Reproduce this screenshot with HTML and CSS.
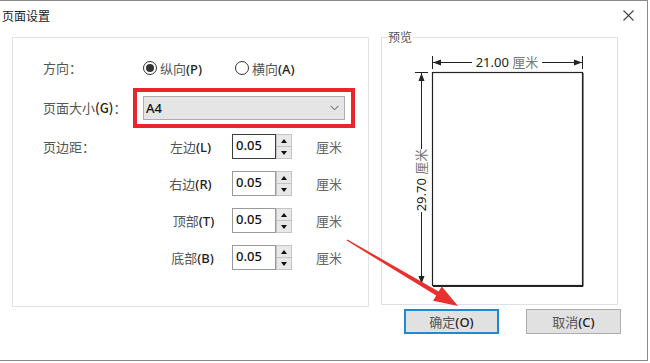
FILE: index.html
```html
<!DOCTYPE html>
<html lang="zh">
<head>
<meta charset="utf-8">
<title>页面设置</title>
<link rel="stylesheet" href="styles.css">
</head>
<body>
<div class="dialog">
  <div class="titlebar">
    <span class="title">页面设置</span>
    <svg class="close" width="11" height="11" viewBox="0 0 11 11"><path d="M0.5 0.5 L10.5 10.5 M10.5 0.5 L0.5 10.5" stroke="#444" stroke-width="1.1" fill="none"/></svg>
  </div>
  <div class="content">
    <div class="group">
      <div class="row orient">
        <span class="label">方向：</span>
        <span class="option opt1"><span class="radio checked"></span><span>纵向<b>(P)</b></span></span>
        <span class="option"><span class="radio"></span><span>横向<b>(A)</b></span></span>
      </div>
      <div class="row size">
        <span class="label narrow">页面大小<b>(G)</b>：</span>
        <div class="highlight">
          <div class="combo">
            <span class="combo-val">A4</span>
            <svg width="9" height="6" viewBox="0 0 9 6"><path d="M0.5 0.8 L4.5 4.8 L8.5 0.8" stroke="#555" stroke-width="1" fill="none"/></svg>
          </div>
        </div>
      </div>
      <div class="margins">
        <div class="mrow">
          <span class="label">页边距：</span>
          <span class="mlabel">左边<b>(L)</b></span>
          <span class="num focus">0.05</span>
          <span class="spin"><span class="up"></span><span class="down"></span></span>
          <span class="unit">厘米</span>
        </div>
        <div class="mrow">
          <span class="label"></span>
          <span class="mlabel">右边<b>(R)</b></span>
          <span class="num">0.05</span>
          <span class="spin"><span class="up"></span><span class="down"></span></span>
          <span class="unit">厘米</span>
        </div>
        <div class="mrow">
          <span class="label"></span>
          <span class="mlabel shift">顶部<b>(T)</b></span>
          <span class="num">0.05</span>
          <span class="spin"><span class="up"></span><span class="down"></span></span>
          <span class="unit">厘米</span>
        </div>
        <div class="mrow">
          <span class="label"></span>
          <span class="mlabel shift2">底部<b>(B)</b></span>
          <span class="num">0.05</span>
          <span class="spin"><span class="up"></span><span class="down"></span></span>
          <span class="unit">厘米</span>
        </div>
      </div>
    </div>
    <div class="side">
      <div class="preview">
        <span class="legend">预览</span>
        <svg class="diagram" width="235" height="266" viewBox="0 0 235 266">
          <rect x="50.5" y="34.5" width="150" height="213" fill="#fff" stroke="#222" stroke-width="1.2"/>
          <line x1="201" y1="35" x2="201" y2="248.5" stroke="#222" stroke-width="1"/>
          <line x1="51" y1="248.5" x2="201" y2="248.5" stroke="#222" stroke-width="1"/>
          <line x1="50.5" y1="18" x2="50.5" y2="31" stroke="#222" stroke-width="1"/>
          <line x1="200.5" y1="18" x2="200.5" y2="31" stroke="#222" stroke-width="1"/>
          <line x1="51" y1="24.5" x2="90" y2="24.5" stroke="#222" stroke-width="1"/>
          <line x1="160" y1="24.5" x2="200" y2="24.5" stroke="#222" stroke-width="1"/>
          <polygon points="51,24.5 59,21.5 59,27.5" fill="#222"/>
          <polygon points="200,24.5 192,21.5 192,27.5" fill="#222"/>
          <text class="dim" x="125" y="29" text-anchor="middle"><tspan class="dn">21.00</tspan> <tspan class="du">厘米</tspan></text>
          <line x1="33" y1="34.5" x2="46" y2="34.5" stroke="#222" stroke-width="1"/>
          <line x1="39.5" y1="35" x2="39.5" y2="111" stroke="#222" stroke-width="1"/>
          <line x1="39.5" y1="174" x2="39.5" y2="246" stroke="#222" stroke-width="1"/>
          <polygon points="39.5,35 36.5,43 42.5,43" fill="#222"/>
          <polygon points="39.5,246 36.5,238 42.5,238" fill="#222"/>
          <text class="dim" transform="translate(44,142) rotate(-90)" x="0" y="0" text-anchor="middle"><tspan class="dn">29.70</tspan> <tspan class="du">厘米</tspan></text>
        </svg>
      </div>
      <div class="buttons">
        <button class="btn default">确定<b>(O)</b></button>
        <button class="btn">取消<b>(C)</b></button>
      </div>
    </div>
  </div>
  <svg class="pointer" width="647" height="360" viewBox="0 0 647 360">
    <polygon points="347.4,239.4 438.6,291.6 441.8,286.4 458,306 433.1,300.8 436.2,295.6 346.6,240.6" fill="#e8302e"/>
  </svg>
</div>
</body>
</html>
```

FILE: styles.css
```css
* { box-sizing: border-box; }
body {
  margin: 0;
  background: #fff;
  font-family: "Noto Sans", "Noto Sans CJK SC", sans-serif;
  font-size: 13px;
  color: #555;
}
b { font-weight: 500; color: #222; }
.dialog {
  position: relative;
  width: 648px;
  height: 361px;
  border-top: 1px solid #8a8a8a;
  border-right: 1px solid #8a8a8a;
  border-bottom: 1px solid #8a8a8a;
  background: #fff;
}
.titlebar {
  height: 28px;
  display: flex;
  align-items: center;
  justify-content: space-between;
  padding-left: 2px;
  padding-right: 13px;
}
.title {
  font-family: "Noto Sans CJK SC", sans-serif;
  font-size: 12px;
  color: #1a1a1a;
}
.close { display: block; }
.content {
  display: flex;
  padding: 8px 0 0 12px;
}
.group {
  width: 357px;
  height: 270px;
  border: 1px solid #e2e2e2;
  padding: 18px 0 0 30px;
}
.row { display: flex; align-items: center; }
.label {
  width: 100px;
  flex: none;
  font-family: "Noto Sans CJK SC", sans-serif;
  color: #555;
  line-height: 18px;
}
.label.narrow { width: 90px; }
.orient { height: 24px; }
.option {
  display: flex;
  align-items: center;
  gap: 3px;
  color: #555;
}
.opt1 { width: 92px; }
.radio {
  width: 14px;
  height: 14px;
  border: 1px solid #333;
  border-radius: 50%;
  display: inline-flex;
  align-items: center;
  justify-content: center;
  background: #fff;
}
.radio.checked::after {
  content: "";
  width: 8px;
  height: 8px;
  border-radius: 50%;
  background: #333;
}
.size { margin-top: 8px; height: 40px; }
.highlight {
  width: 222px;
  height: 40px;
  border: 4px solid #e8262b;
  padding: 4px 6px;
}
.combo {
  height: 24px;
  background: #e5e5e5;
  border: 1px solid #acacac;
  display: flex;
  align-items: center;
  justify-content: space-between;
  padding: 0 5px 0 2px;
}
.combo-val { color: #111; font-weight: 500; }
.margins {
  margin-top: 6px;
  display: flex;
  flex-direction: column;
  gap: 12px;
}
.mrow {
  display: flex;
  align-items: center;
  height: 25px;
}
.mlabel {
  width: 89px;
  padding-left: 6px;
  text-align: center;
  color: #555;
}
.mlabel.shift { padding-left: 12px; }
.mlabel.shift2 { padding-left: 10px; }
.num {
  width: 44px;
  height: 25px;
  border: 1px solid #9a9a9a;
  background: #fff;
  color: #111;
  font-weight: 500;
  padding: 1px 0 0 3px;
  line-height: 18px;
}
.num.focus { border-color: #3c3c3c; }
.spin {
  width: 16px;
  height: 25px;
  display: flex;
  flex-direction: column;
  border: 1px solid #c4c4c4;
  background: #e8e8e8;
}
.spin span {
  flex: 1;
  display: flex;
  align-items: center;
  justify-content: center;
}
.spin .up { border-bottom: 1px solid #c4c4c4; }
.spin .up::after {
  content: "";
  border-left: 3px solid transparent;
  border-right: 3px solid transparent;
  border-bottom: 4px solid #111;
}
.spin .down::after {
  content: "";
  border-left: 3px solid transparent;
  border-right: 3px solid transparent;
  border-top: 4px solid #111;
}
.unit {
  margin-left: 24px;
  color: #666;
  font-family: "Noto Sans CJK SC", sans-serif;
}
.side {
  margin-left: 12px;
  width: 240px;
}
.preview {
  position: relative;
  width: 237px;
  height: 268px;
  border: 1px solid #e0e0e0;
}
.legend {
  position: absolute;
  top: -9px;
  left: 5px;
  background: #fff;
  padding: 0 1px;
  font-size: 12px;
  line-height: 16px;
  color: #555;
  font-family: "Noto Sans CJK SC", sans-serif;
}
.diagram { display: block; }
.dim { font-size: 13px; font-family: "Noto Sans", "Noto Sans CJK SC", sans-serif; }
.dn { fill: #222; }
.du { fill: #777; }
.buttons {
  margin-top: 4px;
  display: flex;
  gap: 27px;
  padding-left: 23px;
}
.btn {
  width: 95px;
  height: 25px;
  background: #e1e1e1;
  border: 1px solid #adadad;
  font-family: "Noto Sans", "Noto Sans CJK SC", sans-serif;
  font-size: 13px;
  color: #555;
  padding: 0;
}
.btn.default {
  border: 2px solid #1d8ad6;
}
.pointer {
  position: absolute;
  left: 0;
  top: -1px;
  pointer-events: none;
}
```
